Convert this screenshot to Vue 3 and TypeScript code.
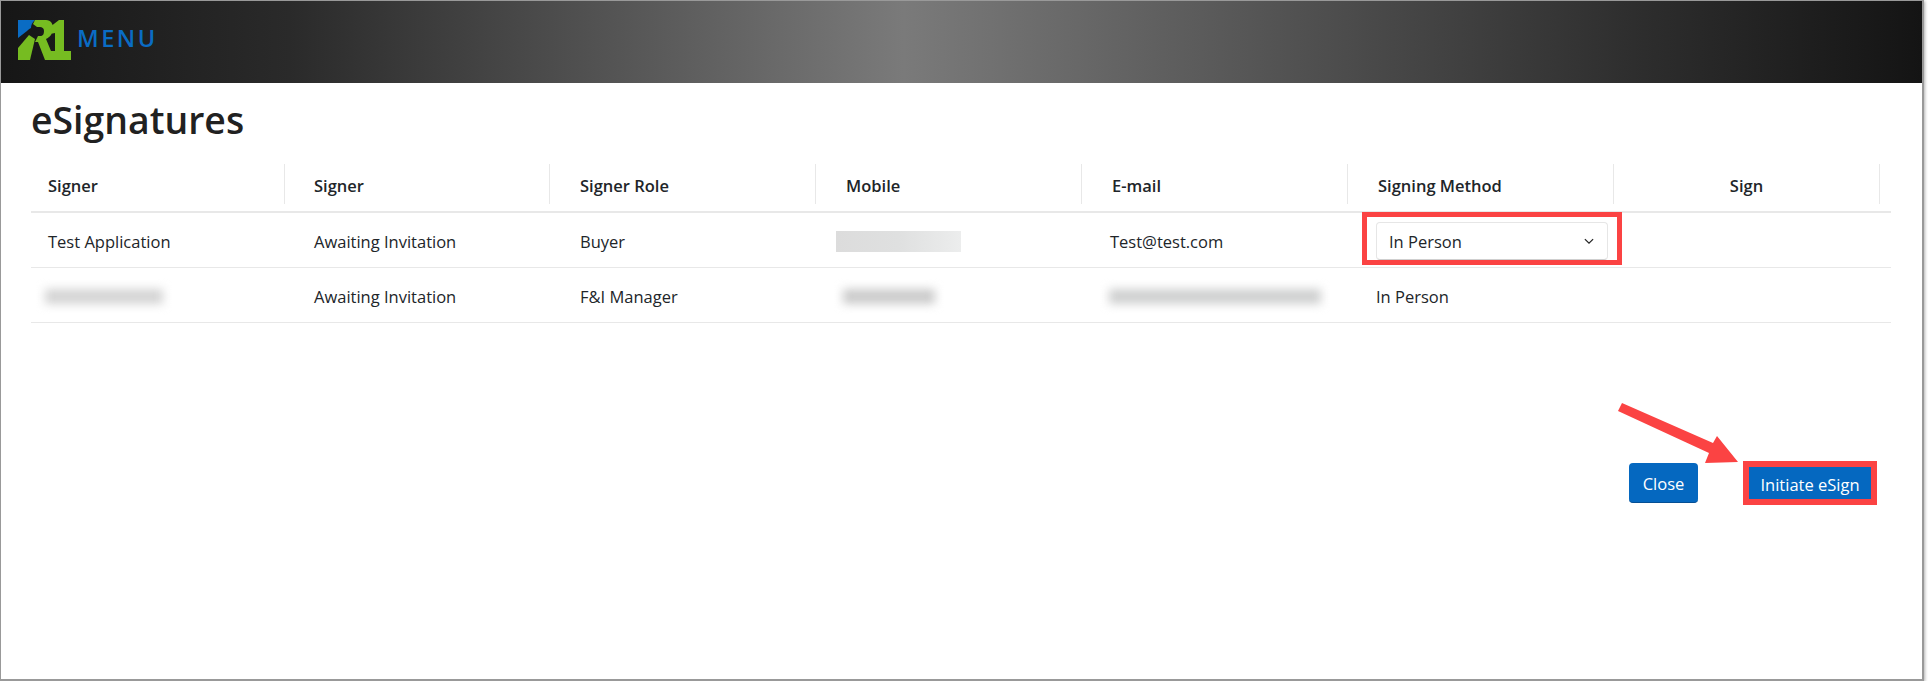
<script setup lang="ts">
const headers = ['Signer', 'Signer', 'Signer Role', 'Mobile', 'E-mail', 'Signing Method', 'Sign']
</script>

<template>
  <div class="frame">
    <header class="topbar">
      <svg class="logo" viewBox="0 0 53 40" width="53" height="40" aria-hidden="true">
        <path fill="#0a6cc4" d="M0 0H17C14 3 13 5 13 8C11 9 10 10 9 11L0 18Z" />
        <path fill="#76bc21" d="M17 0H28C33 0 35 4 35 8C35 14 32 17 28 19L33 31H37V13L32 14V7L41 0H46V31H53V40H27L20 22H17L20 16H22C25 16 26 14 26 11C26 8 24 7 22 7H19L15 4Z" />
        <path fill="#76bc21" d="M0 40V28L11 15L17 19L12 40Z" />
      </svg>
      <span class="menu">MENU</span>
    </header>
    <main class="content">
      <h1 class="title">eSignatures</h1>
      <div class="table">
        <div class="row head">
          <div v-for="(h, i) in headers" :key="i" class="cell hcell" :class="{ center: i === 6 }">
            <span>{{ h }}</span>
          </div>
        </div>
        <div class="row body">
          <div class="cell">Test Application</div>
          <div class="cell">Awaiting Invitation</div>
          <div class="cell">Buyer</div>
          <div class="cell"><div class="redact solid"></div></div>
          <div class="cell">Test@test.com</div>
          <div class="cell selectcell">
            <div class="select">
              <span>In Person</span>
              <svg viewBox="0 0 16 16" width="12" height="12" aria-hidden="true">
                <path d="M2.5 5.5 8 11l5.5-5.5" fill="none" stroke="#222" stroke-width="1.6" />
              </svg>
            </div>
          </div>
          <div class="cell"></div>
        </div>
        <div class="row body">
          <div class="cell"><div class="redact name"></div></div>
          <div class="cell">Awaiting Invitation</div>
          <div class="cell">F&amp;I Manager</div>
          <div class="cell"><div class="redact phone"></div></div>
          <div class="cell"><div class="redact mail"></div></div>
          <div class="cell">In Person</div>
          <div class="cell"></div>
        </div>
      </div>
      <div class="actions">
        <button class="btn close">Close</button>
        <button class="btn initiate">Initiate eSign</button>
      </div>
    </main>
    <svg class="arrow" viewBox="0 0 122 64" width="122" height="64" aria-hidden="true">
      <path fill="#fb4343" d="M4 1L95 41L99 34L120 60L87 61L91 51L0 9Z" />
    </svg>
  </div>
</template>

<style>
html, body { margin: 0; background: #fff; }
</style>

<style scoped>
.frame {
  position: relative;
  width: 1921px;
  height: 678px;
  border: 1px solid #999;
  border-width: 1px 2px 2px 1px;
  background: #fff;
  box-shadow: 1px 1px 3px rgba(0, 0, 0, 0.3);
  font-family: "Open Sans", "Noto Sans", sans-serif;
  color: #212529;
  overflow: hidden;
}
.topbar {
  height: 82px;
  display: flex;
  align-items: center;
  padding-left: 17px;
  gap: 6px;
  background: linear-gradient(90deg, #161616 0%, #2a2a2a 15%, #7a7a7a 47%, #2e2e2e 85%, #141414 100%);
}
.logo { flex: none; margin-top: -4px; }
.menu {
  font-size: 23.5px;
  font-weight: 600;
  letter-spacing: 2.5px;
  color: #0a6cc4;
  margin-top: -9px;
}
.content { padding: 0 30px; }
.title {
  margin: 0;
  height: 81px;
  box-sizing: border-box;
  padding-top: 13px;
  font-size: 37.4px;
  font-weight: 600;
  line-height: 47px;
  color: #212121;
}
.table { width: 1860px; }
.row {
  display: grid;
  grid-template-columns: 254px 265px repeat(5, 266px) 11px;
  border-bottom: 1px solid #e8e8e8;
}
.head { height: 47px; border-bottom-width: 2px; }
.body { height: 54px; }
.cell {
  padding-left: 30px;
  padding-top: 2px;
  box-sizing: border-box;
  display: flex;
  align-items: center;
  font-size: 16.5px;
  min-width: 0;
}
.cell:first-child { padding-left: 17px; }
.cell:nth-child(2) { padding-left: 29px; }
.body .cell:nth-child(5), .body .cell:nth-child(6) { padding-left: 28px; }
.hcell {
  height: 40px;
  border-right: 1px solid #e8e8e8;
  font-weight: 600;
}
.center { justify-content: center; padding-left: 0; }
.body .selectcell { padding-left: 29px; padding-top: 1px; position: relative; }
.select {
  width: 232px;
  height: 38px;
  box-sizing: border-box;
  padding: 1px 12px 0;
  display: flex;
  align-items: center;
  justify-content: space-between;
  border: 1px solid #e6e6e6;
  border-bottom-color: #cfcfcf;
  border-radius: 4px;
}
.redact { height: 21px; }
.solid {
  width: 125px;
  margin-left: -10px;
  background: linear-gradient(90deg, #dcdcdc, #dfe0e0 50%, #eceded);
}
.name { width: 118px; margin-left: -3px; background: #d4d4d4; filter: blur(5px); height: 15px; }
.phone { width: 92px; margin-left: -3px; background: #cbcbcb; filter: blur(5px); height: 15px; }
.mail { width: 212px; margin-left: -1px; background: #cfd0d0; filter: blur(5px); height: 15px; }
.actions {
  display: flex;
  justify-content: flex-end;
  align-items: center;
  gap: 51px;
  margin-top: 140px;
  width: 1840px;
}
.btn {
  font: inherit;
  font-size: 16.5px;
  color: #fff;
  background: #0568c0;
  border: none;
  padding: 2px 0 0;
}
.close {
  width: 69px;
  height: 40px;
  border-radius: 4px;
  border-bottom: 1px solid #054f94;
}
.initiate {
  width: 122px;
  height: 32px;
  outline: 6px solid #fb4343;
}
.selectcell::after {
  content: "";
  position: absolute;
  left: 14px;
  top: -1px;
  width: 260px;
  height: 53px;
  box-sizing: border-box;
  border: 5px solid #fb4343;
}
.arrow {
  position: absolute;
  left: 1617px;
  top: 401px;
}
</style>
